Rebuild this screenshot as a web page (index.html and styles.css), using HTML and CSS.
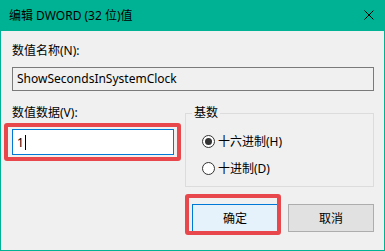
FILE: index.html
```html
<!DOCTYPE html>
<html lang="zh-CN">

<head>
    <meta charset="UTF-8">
    <title>编辑 DWORD (32 位)值</title>
    <link rel="stylesheet" href="styles.css">
</head>

<body>
    <div class="dialog">
        <div class="title-bar">
            <span class="title">编辑 DWORD (32 位)值</span>
            <svg class="close" width="10" height="10" viewBox="0 0 10 10">
                <path d="M0.5 0.5 L9.5 9.5 M9.5 0.5 L0.5 9.5" stroke="#000" stroke-width="1" fill="none" />
            </svg>
        </div>

        <div class="content">
            <div class="label">数值名称(N):</div>
            <div class="name-box">ShowSecondsInSystemClock</div>

            <div class="middle-row">
                <div class="data-col">
                    <div class="label">数值数据(V):</div>
                    <div class="data-input">1<span class="caret"></span></div>
                </div>

                <fieldset class="base-group">
                    <legend>基数</legend>
                    <div class="radio-item">
                        <span class="radio checked"></span>
                        <span>十六进制(H)</span>
                    </div>
                    <div class="radio-item">
                        <span class="radio"></span>
                        <span>十进制(D)</span>
                    </div>
                </fieldset>
            </div>

            <div class="button-row">
                <button class="btn btn-default">确定</button>
                <button class="btn">取消</button>
            </div>
        </div>

        <!-- 红色标注框 -->
        <div class="mark mark-input"></div>
        <div class="mark mark-ok"></div>
    </div>
</body>

</html>
```

FILE: styles.css
```css
body {
    margin: 0;
    background-color: #f0f0f0;
}

.dialog {
    position: relative;
    width: 385px;
    height: 251px;
    box-sizing: border-box;
    border: 1px solid #00b294;
    border-top: none;
    background-color: #f0f0f0;
    font-family: "Noto Sans", "Noto Sans CJK SC", sans-serif;
    font-size: 12px;
    color: #000;
}

.title-bar {
    display: flex;
    align-items: center;
    justify-content: space-between;
    height: 31px;
    margin: 0 -1px;
    padding: 0 11px 0 9px;
    background-color: #00b294;
}

.title {
    line-height: 31px;
}

.close {
    display: block;
    margin-top: -1px;
}

.content {
    padding: 12px 10px 0 11px;
}

.label {
    height: 16px;
    line-height: 16px;
}

.name-box {
    margin-top: 8px;
    height: 24px;
    line-height: 22px;
    box-sizing: border-box;
    padding-left: 4px;
    border: 1px solid #7a7a7a;
    background-color: #f0f0f0;
}

.middle-row {
    display: flex;
    gap: 11px;
    margin-top: 14px;
}

.data-col {
    width: 162px;
}

.data-input {
    display: flex;
    align-items: center;
    margin-top: 8px;
    height: 26px;
    box-sizing: border-box;
    padding-left: 4px;
    border: 1px solid #0078d7;
    background-color: #fff;
}

.caret {
    display: inline-block;
    width: 0;
    height: 15px;
    margin-left: 1px;
    border-left: 1px solid #000;
}

.base-group {
    flex: 1;
    margin: 0;
    height: 82px;
    box-sizing: border-box;
    padding: 11px 0 0 16px;
    border: 1px solid #dcdcdc;
}

.base-group legend {
    margin-left: -10px;
    padding: 0 2px;
    line-height: 16px;
}

.radio-item {
    display: flex;
    align-items: center;
    gap: 3px;
    height: 18px;
    margin-bottom: 9px;
}

.radio {
    position: relative;
    width: 13px;
    height: 13px;
    box-sizing: border-box;
    border: 1px solid #333;
    border-radius: 50%;
    background-color: #fff;
}

.radio.checked::after {
    content: "";
    position: absolute;
    left: 2px;
    top: 2px;
    width: 7px;
    height: 7px;
    border-radius: 50%;
    background-color: #333;
}

.button-row {
    display: flex;
    justify-content: flex-end;
    gap: 10px;
    margin-top: 17px;
}

.btn {
    width: 86px;
    height: 28px;
    padding: 0;
    border: 1px solid #adadad;
    background-color: #e1e1e1;
    font-family: inherit;
    font-size: 12px;
    color: #000;
}

.btn-default {
    border-color: #0078d7;
    background-color: #e5f1fb;
}

.mark {
    position: absolute;
    box-sizing: border-box;
    border: 4px solid #e8484c;
    border-radius: 3px;
}

.mark-input {
    left: 3px;
    top: 123px;
    width: 177px;
    height: 38px;
}

.mark-ok {
    left: 184px;
    top: 194px;
    width: 96px;
    height: 41px;
}
```
